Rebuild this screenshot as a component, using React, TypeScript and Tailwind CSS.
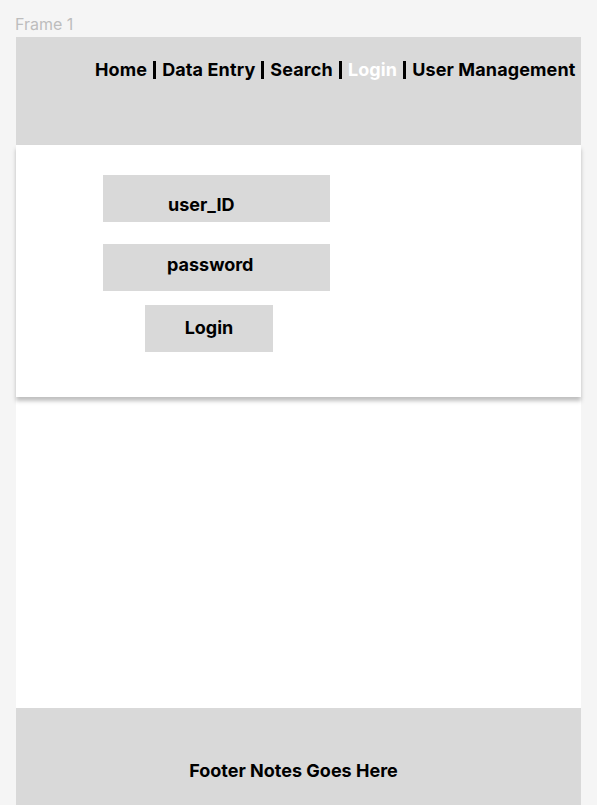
export default function App() {
  return (
    <div className="min-h-[805px] bg-[#f5f5f5] font-['Inter',sans-serif]">
      <div className="px-[16px] pt-[13px]">
        <div className="-ml-[1px] text-[16px] leading-[22px] text-[#bdbdbd]">Frame 1</div>
        <div className="mt-[2px] w-[565px] bg-white">
          <header className="h-[108px] bg-[#d9d9d9] pl-[79px] pt-[20px]">
            <nav className="flex items-center gap-[6px] text-[18px] font-bold leading-[26px] tracking-[0.12px] text-black">
              <span>Home</span>
              <span className="h-[18px] w-[3px] bg-black" />
              <span>Data Entry</span>
              <span className="h-[18px] w-[3px] bg-black" />
              <span>Search</span>
              <span className="h-[18px] w-[3px] bg-black" />
              <span className="text-white">Login</span>
              <span className="h-[18px] w-[3px] bg-black" />
              <span>User Management</span>
            </nav>
          </header>

          <section className="relative h-[252px] bg-white pl-[87px] pt-[30px] shadow-[0_4px_4px_rgba(0,0,0,0.25)]">
            <div className="flex h-[47px] w-[227px] items-center bg-[#d9d9d9] pl-[65px] pt-[11px] text-[18px] font-bold text-black">
              user_ID
            </div>
            <div className="mt-[22px] flex h-[47px] w-[227px] items-center bg-[#d9d9d9] pb-[7px] pl-[64px] text-[18px] font-bold text-black">
              password
            </div>
            <button className="ml-[42px] mt-[14px] flex h-[47px] w-[128px] items-center justify-center bg-[#d9d9d9] pb-[3px] text-[18px] font-bold text-black">
              Login
            </button>
          </section>

          <div className="h-[311px] bg-white" />

          <footer className="flex h-[97px] items-start justify-center bg-[#d9d9d9] pr-[10px] pt-[50px] text-[18px] font-bold leading-[26px] text-black">
            Footer Notes Goes Here
          </footer>
        </div>
      </div>
    </div>
  );
}
